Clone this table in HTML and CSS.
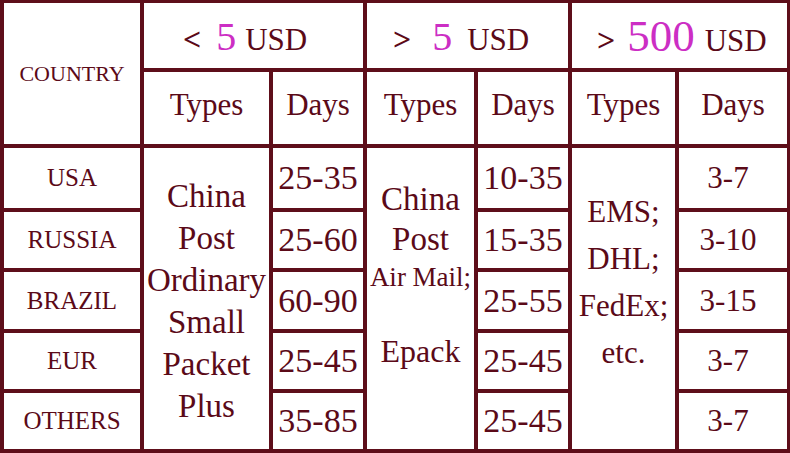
FILE: index.html
```html
<!DOCTYPE html>
<html>
<head>
<meta charset="utf-8">
<link rel="stylesheet" href="styles.css">
</head>
<body>
<div class="table">
  <div class="cell country-h">COUNTRY</div>
  <div class="cell head span2 h1"><div class="hl"><span class="sym">&lt;</span><span class="pink">5</span><span class="usd">USD</span></div></div>
  <div class="cell head span2 h2"><div class="hl"><span class="sym">&gt;</span><span class="pink">5</span><span class="usd">USD</span></div></div>
  <div class="cell head span2 h3"><div class="hl"><span class="sym">&gt;</span><span class="pink big">500</span><span class="usd">USD</span></div></div>

  <div class="cell sub">Types</div>
  <div class="cell sub">Days</div>
  <div class="cell sub">Types</div>
  <div class="cell sub">Days</div>
  <div class="cell sub">Types</div>
  <div class="cell sub">Days</div>

  <div class="cell country">USA</div>
  <div class="cell types t1"><div>China<br>Post<br>Ordinary<br>Small<br>Packet<br>Plus</div></div>
  <div class="cell days">25-35</div>
  <div class="cell types t2"><div><div>China</div><div>Post</div><div class="small">Air Mail;</div><div class="ep">Epack</div></div></div>
  <div class="cell days">10-35</div>
  <div class="cell types t3"><div>EMS;<br>DHL;<br>FedEx;<br>etc.</div></div>
  <div class="cell days last">3-7</div>

  <div class="cell country">RUSSIA</div>
  <div class="cell days">25-60</div>
  <div class="cell days">15-35</div>
  <div class="cell days last">3-10</div>

  <div class="cell country">BRAZIL</div>
  <div class="cell days">60-90</div>
  <div class="cell days">25-55</div>
  <div class="cell days last">3-15</div>

  <div class="cell country">EUR</div>
  <div class="cell days">25-45</div>
  <div class="cell days">25-45</div>
  <div class="cell days last">3-7</div>

  <div class="cell country">OTHERS</div>
  <div class="cell days">35-85</div>
  <div class="cell days">25-45</div>
  <div class="cell days last">3-7</div>
</div>
</body>
</html>
```

FILE: styles.css
```css
html, body {
  margin: 0;
  padding: 0;
  background: #ffffff;
}
.table {
  width: 790px;
  height: 453px;
  box-sizing: border-box;
  display: grid;
  grid-template-columns: 136px 125px 90px 107px 90px 103px 108px;
  grid-template-rows: 65px 72px 60px 56px 57px 56px 56px;
  gap: 4px;
  padding: 3px 3px 4px 4px;
  background: #5e0e1a;
  font-family: "Liberation Serif", "Times New Roman", serif;
  color: #5b0a18;
}
.cell {
  background: #ffffff;
  display: flex;
  align-items: center;
  justify-content: center;
  text-align: center;
  white-space: nowrap;
  box-sizing: border-box;
}
.country-h {
  grid-row: span 2;
  font-size: 22px;
}
.span2 {
  grid-column: span 2;
}
.head {
  justify-content: flex-start;
  padding-top: 5px;
}
.hl {
  line-height: 46px;
  font-size: 31px;
}
.h1 .hl {
  margin-left: 39px;
}
.h2 .hl {
  margin-left: 26px;
}
.h3 .hl {
  margin-left: 25px;
}
.sym {
  font-size: 32px;
  font-weight: bold;
}
.pink {
  color: #cc2ec4;
  font-size: 40px;
}
.h1 .sym {
  margin-right: 15px;
}
.h1 .pink {
  margin-right: 9px;
}
.h2 .sym {
  margin-right: 21px;
}
.h2 .pink {
  margin-right: 15px;
}
.h3 .sym {
  margin-right: 12px;
}
.h3 .pink {
  font-size: 45px;
  margin-right: 10px;
}
.usd {
  font-size: 31px;
}
.sub {
  font-size: 31px;
  padding-bottom: 6px;
}
.country {
  font-size: 25px;
}
.days {
  font-size: 34px;
}
.days.last {
  font-size: 31px;
  padding-right: 10px;
}
.types {
  grid-row: span 5;
  font-size: 33px;
  line-height: 42px;
}
.types.t1 {
  padding-top: 4px;
}
.types.t2 {
  line-height: 40px;
  padding-bottom: 48px;
}
.types.t2 .small {
  font-size: 27px;
  line-height: 36px;
}
.types.t2 .ep {
  font-size: 32px;
  margin-top: 36px;
}
.types.t3 {
  font-size: 31px;
  line-height: 47px;
  padding-bottom: 34px;
}
```
